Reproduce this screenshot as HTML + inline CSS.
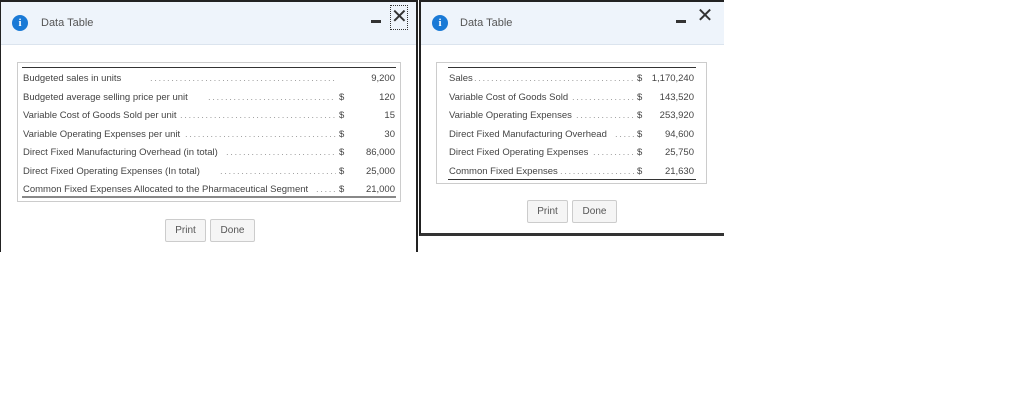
<!DOCTYPE html>
<html><head><style>
body{margin:0;width:1024px;height:416px;background:#fff;position:relative;overflow:hidden;font-family:"Liberation Sans",Arial,sans-serif;}
.a{position:absolute;}
.hdr{background:#eef4fb;border-bottom:1px solid #dbe4ee;}
.ic{width:16px;height:16px;border-radius:50%;background:#1a7ad6;color:#fff;font:bold 11px "Liberation Serif",serif;text-align:center;line-height:16px;}
.t{font-size:11px;color:#555;}
.row{position:absolute;font-size:9.5px;color:#444;white-space:nowrap;}
.dots{position:absolute;font-size:9.5px;color:#999;letter-spacing:1.6px;white-space:nowrap;overflow:hidden;}
.btn{position:absolute;border:1px solid #ccc;background:#f5f5f5;font-size:10px;color:#555;text-align:center;line-height:21px;height:21px;border-radius:2px;}
.r{text-align:right;}
</style></head><body>
<div class="a" style="left:0;top:0;width:418px;height:252px;border-top:2px solid #222;border-left:1px solid #222;border-right:2px solid #222;box-sizing:border-box;"></div>
<div class="a hdr" style="left:1px;top:2px;width:415px;height:42px;"></div>
<div class="a ic" style="left:12px;top:15px;">i</div>
<div class="a t" style="left:41px;top:17px;">Data Table</div>
<div class="a" style="left:371px;top:20px;width:10px;height:3px;background:#333;"></div>
<div class="a" style="left:390px;top:5px;width:16px;height:23px;border:1px dotted #333;font-size:20px;line-height:22px;text-align:center;color:#333;">✕</div>
<div class="a" style="left:17px;top:62px;width:384px;height:140px;border:1px solid #ccc;box-sizing:border-box;"></div>
<div class="a" style="left:22px;top:67px;width:374px;height:1px;background:#333;"></div>
<div class="a" style="left:22px;top:196px;width:374px;height:2px;background:#888;"></div>
<div class="a" style="left:419px;top:0;width:305px;height:236px;border-top:2px solid #222;border-left:2px solid #222;border-bottom:3px solid #333;box-sizing:border-box;"></div>
<div class="a hdr" style="left:421px;top:2px;width:303px;height:42px;"></div>
<div class="a ic" style="left:432px;top:15px;">i</div>
<div class="a t" style="left:460px;top:17px;">Data Table</div>
<div class="a" style="left:676px;top:20px;width:10px;height:3px;background:#333;"></div>
<div class="a" style="left:696px;top:5px;width:18px;height:22px;font-size:20px;line-height:22px;text-align:center;color:#333;">✕</div>
<div class="a" style="left:436px;top:62px;width:271px;height:122px;border:1px solid #ccc;box-sizing:border-box;"></div>
<div class="a" style="left:448px;top:67px;width:248px;height:1px;background:#333;"></div>
<div class="a" style="left:448px;top:179px;width:248px;height:1px;background:#333;"></div>

<div class="btn" style="left:165px;top:219px;width:39px;">Print</div>
<div class="btn" style="left:210px;top:219px;width:43px;">Done</div>
<div class="btn" style="left:527px;top:200px;width:39px;">Print</div>
<div class="btn" style="left:572px;top:200px;width:43px;">Done</div>

<div class="row" style="left:23px;top:73px;">Budgeted sales in units</div>
<div class="dots" style="left:150px;top:73px;width:185px;">............................................................</div>
<div class="row r" style="left:340px;top:73px;width:55px;">9,200</div>
<div class="row" style="left:23px;top:92px;">Budgeted average selling price per unit</div>
<div class="dots" style="left:208px;top:92px;width:128px;">............................................................</div>
<div class="row" style="left:339px;top:92px;">$</div><div class="row r" style="left:340px;top:92px;width:55px;">120</div>
<div class="row" style="left:23px;top:110px;">Variable Cost of Goods Sold per unit</div>
<div class="dots" style="left:180px;top:110px;width:156px;">............................................................</div>
<div class="row" style="left:339px;top:110px;">$</div><div class="row r" style="left:340px;top:110px;width:55px;">15</div>
<div class="row" style="left:23px;top:129px;">Variable Operating Expenses per unit</div>
<div class="dots" style="left:185px;top:129px;width:151px;">............................................................</div>
<div class="row" style="left:339px;top:129px;">$</div><div class="row r" style="left:340px;top:129px;width:55px;">30</div>
<div class="row" style="left:23px;top:147px;">Direct Fixed Manufacturing Overhead (in total)</div>
<div class="dots" style="left:226px;top:147px;width:110px;">............................................................</div>
<div class="row" style="left:339px;top:147px;">$</div><div class="row r" style="left:340px;top:147px;width:55px;">86,000</div>
<div class="row" style="left:23px;top:166px;">Direct Fixed Operating Expenses (In total)</div>
<div class="dots" style="left:220px;top:166px;width:116px;">............................................................</div>
<div class="row" style="left:339px;top:166px;">$</div><div class="row r" style="left:340px;top:166px;width:55px;">25,000</div>
<div class="row" style="left:23px;top:184px;">Common Fixed Expenses Allocated to the Pharmaceutical Segment</div>
<div class="dots" style="left:316px;top:184px;width:20px;">..........</div>
<div class="row" style="left:339px;top:184px;">$</div><div class="row r" style="left:340px;top:184px;width:55px;">21,000</div>

<div class="row" style="left:449px;top:73px;">Sales</div>
<div class="dots" style="left:474px;top:73px;width:162px;">............................................................</div>
<div class="row" style="left:637px;top:73px;">$</div><div class="row r" style="left:640px;top:73px;width:54px;">1,170,240</div>
<div class="row" style="left:449px;top:92px;">Variable Cost of Goods Sold</div>
<div class="dots" style="left:572px;top:92px;width:64px;">..............................</div>
<div class="row" style="left:637px;top:92px;">$</div><div class="row r" style="left:640px;top:92px;width:54px;">143,520</div>
<div class="row" style="left:449px;top:110px;">Variable Operating Expenses</div>
<div class="dots" style="left:576px;top:110px;width:60px;">..............................</div>
<div class="row" style="left:637px;top:110px;">$</div><div class="row r" style="left:640px;top:110px;width:54px;">253,920</div>
<div class="row" style="left:449px;top:129px;">Direct Fixed Manufacturing Overhead</div>
<div class="dots" style="left:615px;top:129px;width:21px;">..........</div>
<div class="row" style="left:637px;top:129px;">$</div><div class="row r" style="left:640px;top:129px;width:54px;">94,600</div>
<div class="row" style="left:449px;top:147px;">Direct Fixed Operating Expenses</div>
<div class="dots" style="left:593px;top:147px;width:43px;">....................</div>
<div class="row" style="left:637px;top:147px;">$</div><div class="row r" style="left:640px;top:147px;width:54px;">25,750</div>
<div class="row" style="left:449px;top:166px;">Common Fixed Expenses</div>
<div class="dots" style="left:560px;top:166px;width:76px;">..............................</div>
<div class="row" style="left:637px;top:166px;">$</div><div class="row r" style="left:640px;top:166px;width:54px;">21,630</div>
</body></html>
